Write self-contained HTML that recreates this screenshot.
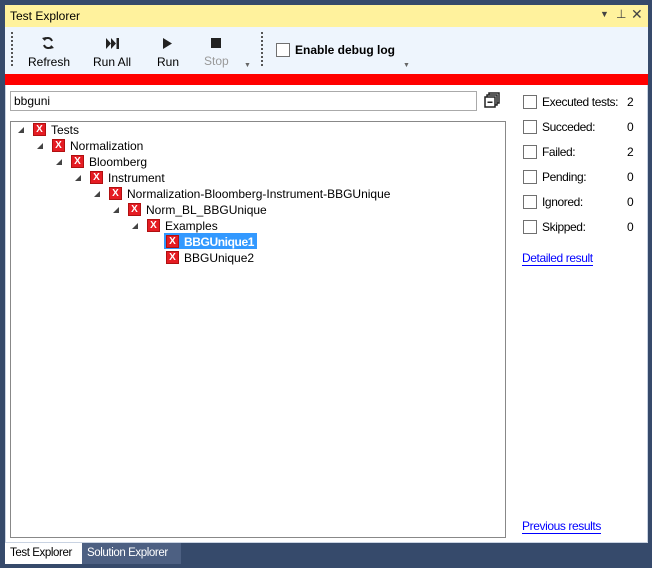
<!DOCTYPE html>
<html><head><meta charset="utf-8"><style>
*{margin:0;padding:0;box-sizing:border-box}
body{width:652px;height:568px;background:#364a6b;font-family:"Liberation Sans",sans-serif;font-size:12px;color:#000;position:relative;overflow:hidden}
.a{position:absolute;white-space:nowrap}
.win{left:5px;top:5px;width:643px;height:538px;background:#fff;border:1px solid #c9d3e2}
.title{left:5px;top:5px;width:643px;height:22px;background:#fff29d;}
.tb{left:5px;top:27px;width:643px;height:47px;background:#eef5fd}
.red{left:5px;top:74px;width:643px;height:11px;background:#f00}
.dots{width:0;border-left:2px dotted #555}
.lbl{font-size:12px}
.x{width:13px;height:13px;background:#e51c23;border:1px solid #b01010;color:#fff;font-weight:bold;font-size:10px;line-height:11px;text-align:center}
.arr{width:0;height:0;border-left:6px solid transparent;border-bottom:6px solid #444}
.cb{width:14px;height:14px;border:1px solid #707070;background:#fff}
.r{letter-spacing:-0.4px}
a{color:#00f;text-decoration:none;border-bottom:1px solid #00f}
</style></head><body>
<div class="a win"></div>
<div class="a title"></div>
<div class="a" style="left:10px;top:9px;font-size:12px">Test Explorer</div>
<div class="a" style="left:600px;top:9px;font-size:9px;color:#444">▼</div>
<div class="a" style="left:616px;top:7px;font-size:12px;color:#444">⊥</div>
<div class="a" style="left:631px;top:6px;font-size:14px;color:#444">✕</div>
<div class="a tb"></div>
<div class="a dots" style="left:11px;top:32px;height:34px"></div>
<div class="a dots" style="left:261px;top:32px;height:34px"></div>
<svg class="a" style="left:41px;top:36px" width="14" height="14" viewBox="0 0 14 14"><path d="M11 5A4.5 4.5 0 0 0 3 4M3 9a4.5 4.5 0 0 0 8 1" fill="none" stroke="#222" stroke-width="2"/><path d="M1 2l3 3 1-4z M13 12l-3-3-1 4z" fill="#222"/></svg>
<div class="a lbl" style="left:28px;top:55px">Refresh</div>
<svg class="a" style="left:106px;top:38px" width="14" height="11"><path d="M0 0l5 5.5L0 11zM5 0l5 5.5L5 11z" fill="#222"/><rect x="10.5" y="0" width="2.5" height="11" fill="#222"/></svg>
<div class="a lbl" style="left:93px;top:55px">Run All</div>
<svg class="a" style="left:163px;top:38px" width="10" height="11"><path d="M0 0l9 5.5L0 11z" fill="#222"/></svg>
<div class="a lbl" style="left:157px;top:55px">Run</div>
<div class="a" style="left:211px;top:38px;width:10px;height:10px;background:#222"></div>
<div class="a lbl" style="left:204px;top:54px;color:#999">Stop</div>
<div class="a" style="left:244px;top:62px;font-size:7px;color:#666">▼</div>
<div class="a" style="left:403px;top:62px;font-size:7px;color:#666">▼</div>
<div class="a cb" style="left:276px;top:43px"></div>
<div class="a" style="left:295px;top:43px;font-weight:bold">Enable debug log</div>
<div class="a red"></div>
<div class="a" style="left:10px;top:91px;width:467px;height:20px;border:1px solid #aaa;padding:2px 3px">bbguni</div>
<svg class="a" style="left:484px;top:92px" width="16" height="16"><rect x="5" y="1" width="10" height="10" fill="#fff" stroke="#222" stroke-width="1.5"/><rect x="3" y="3" width="10" height="10" fill="#fff" stroke="#222" stroke-width="1.5"/><rect x="1" y="5" width="10" height="10" fill="#fff" stroke="#222" stroke-width="1.5"/><rect x="3.5" y="9.5" width="5" height="1.5" fill="#222"/></svg>
<div class="a" style="left:10px;top:121px;width:496px;height:417px;border:1px solid #888"></div>
<div class="a arr" style="left:18px;top:127px"></div><div class="a x" style="left:33px;top:123px">X</div><div class="a" style="left:51px;top:123px">Tests</div>
<div class="a arr" style="left:37px;top:143px"></div><div class="a x" style="left:52px;top:139px">X</div><div class="a" style="left:70px;top:139px">Normalization</div>
<div class="a arr" style="left:56px;top:159px"></div><div class="a x" style="left:71px;top:155px">X</div><div class="a" style="left:89px;top:155px">Bloomberg</div>
<div class="a arr" style="left:75px;top:175px"></div><div class="a x" style="left:90px;top:171px">X</div><div class="a" style="left:108px;top:171px">Instrument</div>
<div class="a arr" style="left:94px;top:191px"></div><div class="a x" style="left:109px;top:187px">X</div><div class="a" style="left:127px;top:187px">Normalization-Bloomberg-Instrument-BBGUnique</div>
<div class="a arr" style="left:113px;top:207px"></div><div class="a x" style="left:128px;top:203px">X</div><div class="a" style="left:146px;top:203px">Norm_BL_BBGUnique</div>
<div class="a arr" style="left:132px;top:223px"></div><div class="a x" style="left:147px;top:219px">X</div><div class="a" style="left:165px;top:219px">Examples</div>
<div class="a" style="left:164px;top:233px;width:93px;height:16px;background:#3399ff"></div>
<div class="a x" style="left:166px;top:235px">X</div><div class="a r" style="left:184px;top:235px;color:#fff;font-weight:bold">BBGUnique1</div>
<div class="a x" style="left:166px;top:251px">X</div><div class="a" style="left:184px;top:251px">BBGUnique2</div>
<div class="a cb" style="left:523px;top:95px"></div><div class="a r" style="left:542px;top:95px">Executed tests:</div><div class="a" style="left:627px;top:95px">2</div>
<div class="a cb" style="left:523px;top:120px"></div><div class="a r" style="left:542px;top:120px">Succeded:</div><div class="a" style="left:627px;top:120px">0</div>
<div class="a cb" style="left:523px;top:145px"></div><div class="a r" style="left:542px;top:145px">Failed:</div><div class="a" style="left:627px;top:145px">2</div>
<div class="a cb" style="left:523px;top:170px"></div><div class="a r" style="left:542px;top:170px">Pending:</div><div class="a" style="left:627px;top:170px">0</div>
<div class="a cb" style="left:523px;top:195px"></div><div class="a r" style="left:542px;top:195px">Ignored:</div><div class="a" style="left:627px;top:195px">0</div>
<div class="a cb" style="left:523px;top:220px"></div><div class="a r" style="left:542px;top:220px">Skipped:</div><div class="a" style="left:627px;top:220px">0</div>
<div class="a r" style="left:522px;top:251px"><a>Detailed result</a></div>
<div class="a r" style="left:522px;top:519px"><a>Previous results</a></div>
<div class="a" style="left:5px;top:543px;width:77px;height:21px;background:#fff;padding:4px 0 0 5px;font-size:11.5px;letter-spacing:-0.4px">Test Explorer</div>
<div class="a" style="left:82px;top:543px;width:99px;height:21px;background:#4d6082;color:#fff;padding:4px 0 0 5px;font-size:11.5px;letter-spacing:-0.4px">Solution Explorer</div>
</body></html>
